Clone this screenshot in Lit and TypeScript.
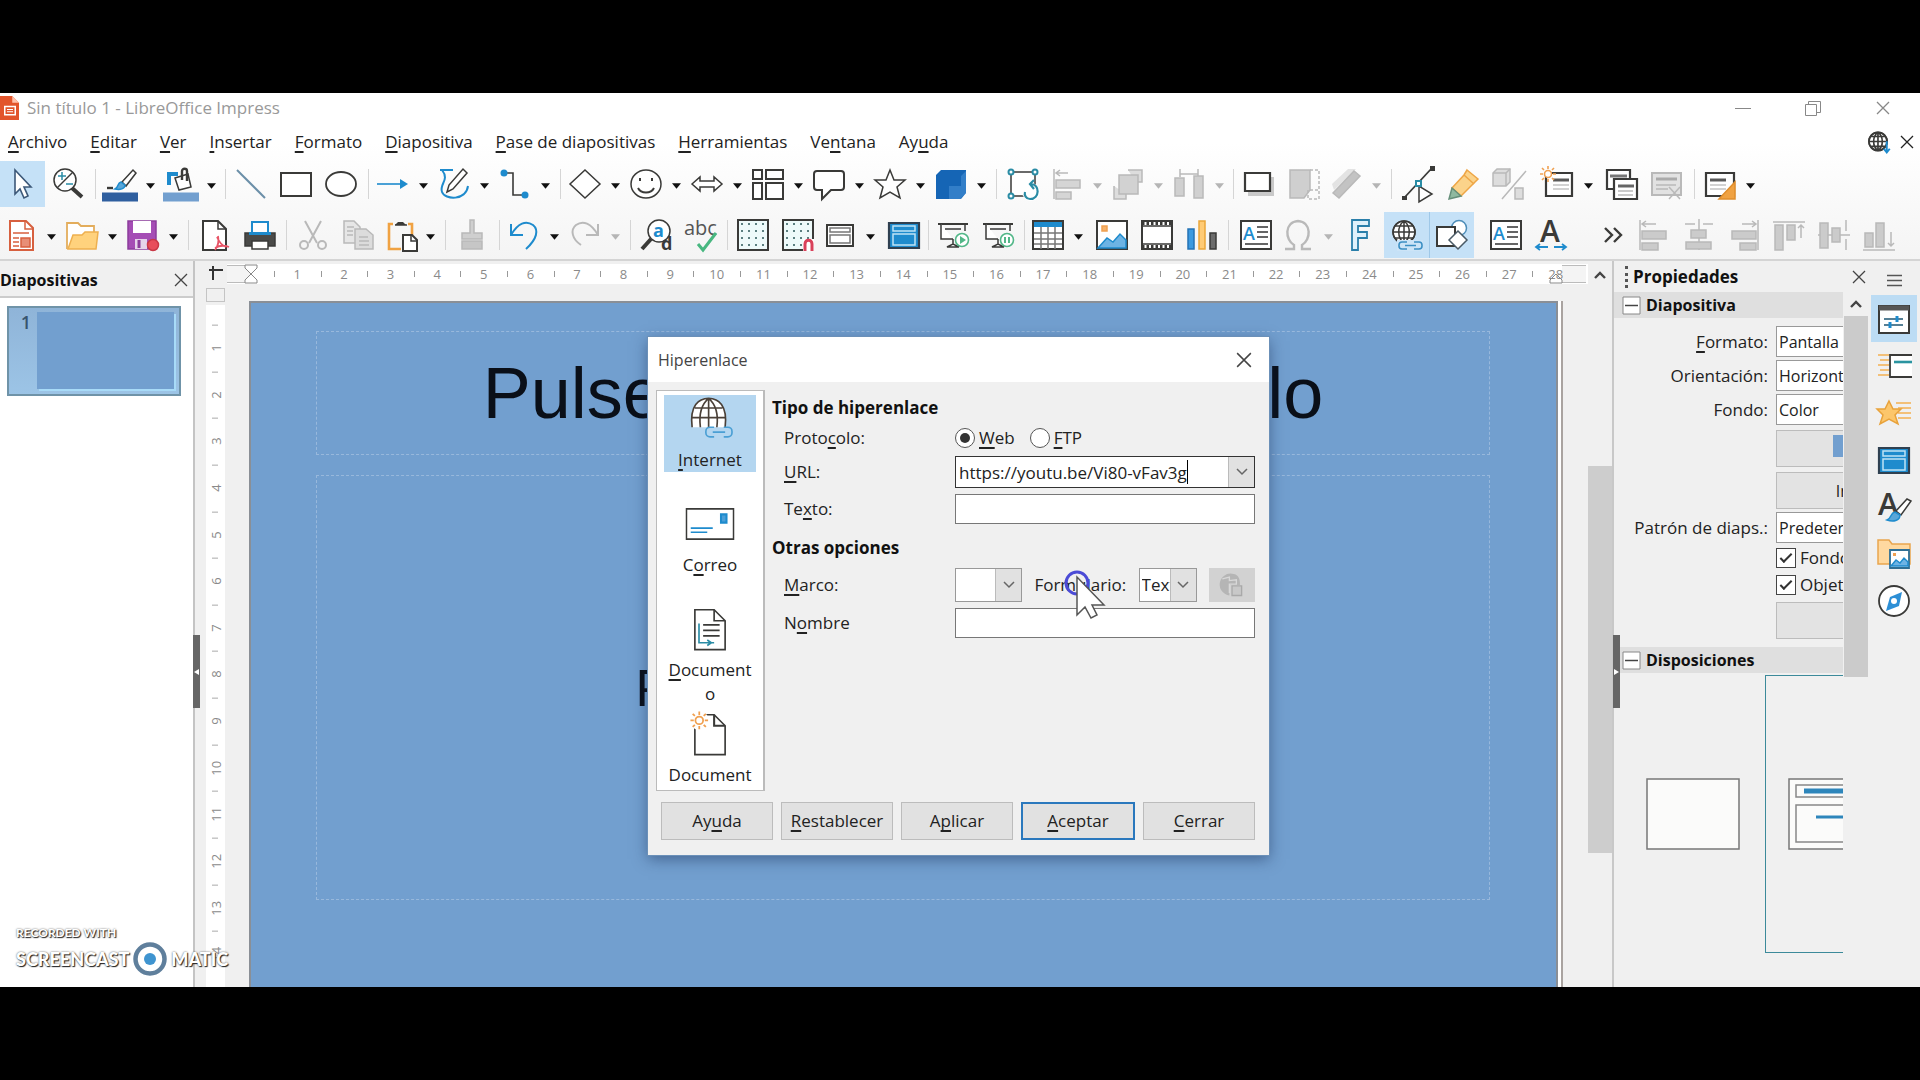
import { LitElement, html, svg, css, nothing } from "lit";
import { customElement } from "lit/decorators.js";
import { classMap } from "lit/directives/class-map.js";

const K = "#3a3a38";
const B = "#1e8bcd";
const T = "#2a8ca5";
const G = "#b9b9b9";

const sun = (x: number, y: number) => svg`<circle cx=${x} cy=${y} r="3.5" fill="#fff" stroke="#f0a050" stroke-width="1.6"/>
  <path d="M${x} ${y - 8}v3M${x} ${y + 5}v3M${x - 8} ${y}h3M${x + 5} ${y}h3M${x - 6} ${y - 6}l2 2M${x + 4} ${y + 4}l2 2M${x + 6} ${y - 6}l-2 2M${x - 4} ${y + 4}l-2 2" stroke="#f0a050" stroke-width="1.6"/>`;

const dots = svg`<path d="M4 5h26M4 12h26M4 19h26M4 26h26" stroke="#5b7f80" stroke-width="2" stroke-dasharray="2 5"/>`;

const globe = svg`<circle cx="13" cy="13" r="11" fill="#fff"/><path d="M13 2a11 11 0 1 0 .1 0zM13 2v22M2 13h22M4 7h18M4 19h18M13 2c-7 5-7 17 0 22M13 2c7 5 7 17 0 22"/>`;

const chain = svg`<path d="M16 23h-5a3 3 0 0 0-3 3v1a3 3 0 0 0 3 3h5M23 23h5a3 3 0 0 1 3 3v1a3 3 0 0 1-3 3h-5M14 26.500h11" stroke="#3c8fc4" stroke-width="1.6"/>`;

const lines = (x: number, y: number) => svg`<path d="M${x} ${y}h16" stroke-width="3" stroke="#5a5a5a"/><path d="M${x} ${y + 5}h16M${x} ${y + 9}h16" stroke="#c4c4c4" stroke-width="1.4"/>`;

const screen = svg`<path d="M1 5h30" stroke-width="2"/><path d="M4 5v15h12M16 20v6M10 28h12l-6-3z" fill="#fff"/><path d="M8 10h16" stroke="#666" stroke-width="2"/><path d="M28 6v6"/>`;

const icons: Record<string, unknown> = {
  pointer: svg`<path d="M8 2v24l5-5 4 9 4-2-4-9h7z" fill="#fff" stroke="#3c5878" stroke-width="1.6"/>`,
  zoom: svg`<circle cx="13" cy="12" r="11" fill="#fff"/><path d="M20 20l10 9" stroke-width="4"/><path d="M5 20L21 4"/><path d="M6 8h8M10 4v8M14 16h7" stroke="${T}"/>`,
  penColor: svg`<path d="M18 14L29 2l3 3-10 13z" fill="#fff"/><path d="M17 14c-4 1-2 5-6 7 5 1 10 0 10-4z" fill="#5aa6d8" stroke="${B}"/><path d="M3 20h6" stroke-width="2.4"/><path d="M-2 29h36" stroke="#2f5f9f" stroke-width="9"/>`,
  fillColor: svg`<path d="M4 17V6h9" stroke="${B}" stroke-width="4"/><path d="M10 10l13-4 3 13-12 3z" fill="#fff"/><path d="M17 12V3c0-3 5-3 5 0v10" stroke-width="2.4"/><path d="M-2 29h36" stroke="#729fcf" stroke-width="9"/>`,
  line: svg`<path d="M2 2l28 28" stroke="#6b8fa8" stroke-width="2"/>`,
  rect: svg`<path d="M1 5h30v23H1z" fill="#fff" stroke-width="2"/>`,
  ellipse: svg`<ellipse cx="16" cy="16" rx="15" ry="12" fill="#fff" stroke-width="1.8"/>`,
  arrow: svg`<path d="M0 16h26" stroke="${B}" stroke-width="1.600"/><path d="M23 11l8 5-8 5z" fill="${B}" stroke="none"/>`,
  curve: svg`<path d="M2 2h13M4 2c8 10-3 14 0 22 3 8 24 9 26-6" stroke="${B}" stroke-width="2"/><path d="M9 24l2-7L25 1l4 4-14 16z" fill="#fff"/>`,
  connector: svg`<path d="M4 5h10v22h12" stroke="${K}" stroke-width="1.6"/><circle cx="5" cy="5" r="3.500" fill="${B}" stroke="none"/><circle cx="26" cy="27" r="3.500" fill="${B}" stroke="none"/>`,
  diamond: svg`<path d="M16 2l15 14-15 14L1 16z" fill="#fff"/>`,
  smiley: svg`<ellipse cx="16" cy="16" rx="15" ry="14" fill="#fff"/><path d="M8 20c3 6 13 6 16 0M10 10v3M22 10v3" stroke-width="2"/>`,
  dblArrow: svg`<path d="M1 16l8-7v4h14V9l8 7-8 7v-4H9v4z" fill="#fff"/>`,
  flow: svg`<path d="M1 2h9v9H1zM14 2h17v9H14zM1 15h9v16H1zM14 15h17v16H14z" fill="#fff" stroke-width="2"/>`,
  callout: svg`<path d="M4 3h24c2 0 3 1 3 3v13c0 2-1 3-3 3H18l-9 9v-9H4c-2 0-3-1-3-3V6c0-2 1-3 3-3z" fill="#fff" stroke-width="2"/>`,
  star: svg`<path d="M16 2l4 10h11l-8 7 3 11-10-6-10 6 3-11-8-7h11z" fill="#fff"/>`,
  cube: svg`<path d="M1 7l5-5h25v23l-5 6H1z" fill="#1565b5" stroke="none"/><path d="M26 8v22l5-5V3zM14 31V18h12v13z" fill="#4f98dc" opacity=".5" stroke="none"/>`,
  rotate: svg`<path d="M4 4h24v24H4z" fill="#fff"/><g fill="#fff" stroke="${T}" stroke-width="2"><circle cx="4" cy="4" r="2.500"/><circle cx="28" cy="4" r="2.500"/><circle cx="4" cy="28" r="2.500"/></g><circle cx="24" cy="24" r="9" fill="#fff" stroke="none"/><path d="M24 16c9 0 9 15-1 15-4 0-6-4-5-7M27 12l-4 4 4 5" stroke="${T}" stroke-width="2.200"/>`,
  alignObj: svg`<path d="M3 1v30M5 5h12M9 2L5 5l4 3" stroke="${G}"/><path d="M5 12h24v8H5zM5 24h15v7H5z" fill="#d5d5d5" stroke="${G}"/>`,
  arrange: svg`<path d="M16 2h14v12h-6M2 18v13h12v-5" fill="#ddd" stroke="${G}"/><path d="M7 7h19v19H7z" fill="#d2d2d2" stroke="${G}"/>`,
  distribute: svg`<path d="M2 10h9v18H2zM21 8h9v22h-9z" fill="#d0d0d0" stroke="${G}"/><path d="M7 1v8M25 1v7M7 6h18" stroke="${G}"/>`,
  shadow: svg`<path d="M5 9h26v19H5z" fill="#c9c9c9" stroke="none"/><path d="M2 5h25v18H2z" fill="#fff" stroke-width="2.200"/>`,
  crop: svg`<path d="M2 2h20v20L16 30H2z" fill="#cfcfcf" stroke="${G}"/><path d="M22 2h9v29H20V22h11" stroke="${G}" stroke-dasharray="3 2"/>`,
  filter: svg`<path d="M2 16L18 1h8L4 22z" fill="#e3e3e3" stroke="none"/><path d="M3 25L24 3l6 5L9 30z" fill="#c3c3c3" stroke="${G}"/>`,
  points: svg`<path d="M2 30L30 0" stroke-width="1.800"/><path d="M28 -2h5v5h-5zM0 28h5v4H0z" fill="${K}" stroke="none"/><path d="M17 18v16l13-8z" fill="#fff"/><path d="M14 13h5v5h-5z" fill="#fff" stroke="${T}" stroke-width="2"/>`,
  glue: svg`<path d="M20 2l11 9-4 4-13 13-9-8L17 7z" fill="#fbd38a" stroke="#eea646"/><path d="M5 20l9 8-12 3z" fill="#8fb9a0" stroke="#668f7a"/><path d="M17 7l10 9" stroke="#eea646"/>`,
  extrude: svg`<path d="M1 5l4-4h13v13l-4 4H1zM23 20h8v11h-8z" fill="#ddd" stroke="${G}"/><path d="M1 5h13v13M14 5l4-4M34 3L10 31" stroke="${G}"/>`,
  newSlide: svg`<path d="M4 5h26v23H4z" fill="#fff" stroke-width="2.200"/>${lines(11, 12)}${sun(6, 6)}`,
  dupSlide: svg`<path d="M1 2h23v19H1z" fill="#fff" stroke-width="2.200"/><path d="M4 8h17" stroke="#777" stroke-width="3"/><path d="M8 11h23v20H8z" fill="#fff" stroke-width="2.200"/><path d="M12 18h16" stroke="#666" stroke-width="3"/><path d="M12 23h15M12 27h15" stroke="${G}"/>`,
  delSlide: svg`<path d="M1 5h29v22H1z" fill="#e2e2e2" stroke="${G}" stroke-width="2"/><path d="M5 11h21" stroke="#aaa" stroke-width="3"/><path d="M5 17h20M5 21h12M18 19l11 12M29 19L18 31" stroke="${G}"/>`,
  layout: svg`<path d="M2 5h28v23H2z" fill="#fff" stroke-width="2.200"/>${lines(6, 12)}<path d="M31 14v17H15z" fill="#f0a242" stroke="#e08e2c"/>`,
  newDoc: svg`<path d="M5 2h16l7 7v22H5z" fill="#fff" stroke="#d7603f" stroke-width="2"/><path d="M20 2v8h8M8 14h16M8 19h6M8 23h6M8 27h6" stroke="#d7603f"/><path d="M16 19h9v9h-9z" fill="#e88f77" stroke="#d7603f"/>`,
  open: svg`<path d="M1 30V4h11l3 3h13v7" fill="#fff" stroke="#e3ad5c" stroke-width="1.800"/><path d="M2 30l5-14h9l3-3h13l-2 17z" fill="#ffd27d" stroke="#eeb04f" stroke-width="1.500"/>`,
  save: svg`<path d="M1 2h28v28H1z" fill="#a54db5" stroke="#8c3d9c"/><path d="M6 2h18v12H6z" fill="#fff" stroke="none"/><path d="M8 20h12v10H8z" fill="#e6d3ea" stroke="none"/><path d="M12 21v8" stroke="#8c3d9c" stroke-width="3"/><circle cx="26" cy="26" r="5.500" fill="#e84d5b" stroke="#c93846"/>`,
  pdf: svg`<path d="M4 2h15l8 8v21H4z" fill="#fff" stroke-width="2"/><path d="M19 2v8h8"/><path d="M16 31c4-5 4-9 3-14M16 29c5-3 9-3 14-1M18 18c2 5 4 8 9 10" stroke="#e85467" stroke-width="1.800"/>`,
  print: svg`<path d="M8 3h16v11H8z" fill="#fff" stroke="${B}" stroke-width="2"/><path d="M1 14h30v13H1z" fill="#4a4a48" stroke="${K}"/><path d="M5 13h22v3H5z" fill="${B}" stroke="none"/><path d="M8 22h16v8H8z" fill="#fff"/>`,
  cut: svg`<path d="M8 2l12 22M24 2L12 24" stroke="${G}" stroke-width="2"/><circle cx="7" cy="26" r="4" stroke="${G}" stroke-width="2"/><circle cx="25" cy="26" r="4" stroke="${G}" stroke-width="2"/>`,
  copy: svg`<path d="M2 2h10l6 6v16H2z" fill="#e6e6e6" stroke="${G}"/><path d="M13 10h11l7 6v14H13z" fill="#dcdcdc" stroke="${G}"/><path d="M17 18h9M17 22h10M17 26h10M5 8h7M5 12h6M5 16h6" stroke="${G}"/>`,
  paste: svg`<path d="M9 5H5v25h12M24 5h4v11" stroke="#f0a242" stroke-width="2.600"/><path d="M11 6h11l-3-3h-5z" fill="${K}" stroke="none"/><path d="M11 6h12"/><path d="M19 16h9l5 5v11H19z" fill="#fff" stroke-width="2"/><path d="M27 16v6h6"/>`,
  clone: svg`<path d="M14 1h4v13h8v6H6v-6h8z" fill="#cfcfcf" stroke="${G}"/><path d="M6 22h20v8H6z" fill="#c6c6c6" stroke="${G}"/>`,
  undo: svg`<path d="M3 5v11h12M3 16C10 4 18 1 25 6c6 5 4 14-7 24" stroke="${B}" stroke-width="2"/>`,
  redo: svg`<path d="M29 5v11H17M29 16C22 4 14 1 7 6c-6 5-4 14 5 20" stroke="${G}" stroke-width="2"/>`,
  find: svg`<circle cx="18" cy="12" r="11" fill="#fff"/><path d="M10 20L1 30" stroke-width="4"/><text x="12" y="18" class="g" font-size="18" font-weight="700" fill="${B}">a</text><text x="20" y="31" class="g" font-size="18" font-weight="700" fill="${K}">d</text>`,
  spell: svg`<text x="-2" y="16" class="g" font-size="20" fill="#555">abc</text><path d="M12 25l5 6L30 14" stroke="#48b780" stroke-width="3"/>`,
  grid: svg`<path d="M1 1h30v30H1z" fill="#eefafa" stroke-width="2"/>${dots}`,
  snap: svg`<path d="M1 1h30v30H1z" fill="#eefafa" stroke-width="2"/>${dots}<path d="M21 20h11v12H21z" fill="#fff" stroke="none"/><path d="M23 32v-7c0-5 7-5 7 0v7" stroke="#d9415a" stroke-width="3"/>`,
  master: svg`<path d="M3 6h26v21H3z" fill="#fff" stroke-width="2"/><path d="M6 9h20v4H6zM6 16h20v8H6z" stroke="#777"/>`,
  display: svg`<path d="M1 4h30v25H1z" fill="#1e8bcd" stroke="#2f4050" stroke-width="2.200"/><path d="M5 7h22v5H5zM5 15h22v11H5z" stroke="#bfe3f5" stroke-width="1.500"/>`,
  present: svg`${screen}<circle cx="25" cy="21" r="6.500" fill="#fff" stroke="#52b788" stroke-width="1.600"/><path d="M23 17l6 4-6 4z" fill="#52b788" stroke="none"/>`,
  presentHere: svg`${screen}<circle cx="25" cy="21" r="6.500" fill="#fff" stroke="#52b788" stroke-width="1.600"/><path d="M23 18v6M27 18v6" stroke="#52b788" stroke-width="2"/>`,
  table: svg`<path d="M1 2h30v28H1z" fill="#fff" stroke-width="2"/><path d="M2 3h28v5H2z" fill="${B}" stroke="none"/><path d="M9 8v22M16 8v22M23 8v22M2 14h28M2 20h28M2 25h28" stroke="#777"/>`,
  image: svg`<path d="M1 2h30v28H1z" fill="#fff" stroke-width="2"/><path d="M6 7h5v5H6z" fill="#f6b26b" stroke="#f0a050"/><path d="M2 29l9-10 6 4 7-8 6 6v8z" fill="#6db3e4" stroke="${B}"/>`,
  film: svg`<path d="M1 2h30v28H1z" fill="#fff" stroke-width="2"/><path d="M1 4h30M1 28h30" stroke-width="4" stroke-dasharray="2.500 2"/><path d="M1 7h30M1 25h30"/>`,
  chart: svg`<path d="M2 10h6v20H2z" fill="#3b9ae0" stroke="#2473b5"/><path d="M13 2h6v28h-6z" fill="#ffcb75" stroke="#eaa63a"/><path d="M24 14h6v16h-6z" fill="#6b6b6b" stroke="${K}"/>`,
  textbox: svg`<path d="M1 2h30v28H1z" fill="#fff" stroke-width="2"/><text x="3" y="21" class="g" font-size="18" font-weight="600" fill="${B}">A</text><path d="M17 8h11M17 13h11M17 18h11M5 25h23" stroke="#666" stroke-width="1.800"/>`,
  omega: svg`<path d="M3 30h9v-4C3 21 2 3 16 2c14 1 13 19 4 24v4h9" stroke="${G}" stroke-width="2.400"/>`,
  fontwork: svg`<path d="M6 1h17v6H12v6h9v6h-9v12H6z" fill="#dff1fb" stroke="#2a7faa" stroke-width="1.800"/>`,
  link: svg`${globe}<path d="M6 21h26v11H6z" fill="#cce4f7" stroke="none"/>${chain}`,
  shapes: svg`<circle cx="23" cy="9" r="7.500" fill="#fff" stroke="#4d8db8"/><path d="M1 8h18v19H1z" fill="#fff" stroke-width="2"/><path d="M22 12l9 9-9 9-9-9z" fill="#fff" stroke="#4a5a66"/>`,
  charSpace: svg`<text x="5" y="23" class="g" font-size="30" font-weight="600" fill="${K}">A</text><path d="M1 28h12M19 28h12M5 25l-4 3 4 3M27 25l4 3-4 3" stroke="${B}" stroke-width="1.800"/>`,
  more: svg`<path d="M9 9l7 7-7 7M18 9l7 7-7 7" stroke-width="2.400"/>`,
  aLeft: svg`<path d="M2 1v30M4 5h14M8 2L4 5l4 3" stroke="${G}"/><path d="M4 12h24v8H4zM4 24h16v7H4z" fill="#cbcbcb" stroke="${G}"/>`,
  aCenter: svg`<path d="M16 0v31M2 5h10M20 5h10" stroke="${G}"/><path d="M8 11h15v8H8zM3 23h25v7H3z" fill="#cbcbcb" stroke="${G}"/>`,
  aRight: svg`<path d="M30 1v30M14 5h14M24 2l4 3-4 3" stroke="${G}"/><path d="M4 12h24v8H4zM12 24h16v7H12z" fill="#cbcbcb" stroke="${G}"/>`,
  aTop: svg`<path d="M0 3h32M28 19V6M25 9l3-3 3 3" stroke="${G}"/><path d="M2 6h8v25H2zM14 6h8v15h-8z" fill="#cbcbcb" stroke="${G}"/>`,
  aMiddle: svg`<path d="M0 16h32M28 1v11M28 20v11" stroke="${G}"/><path d="M2 4h8v25H2zM14 9h8v14h-8z" fill="#cbcbcb" stroke="${G}"/>`,
  aBottom: svg`<path d="M0 31h32M28 13v14M25 24l3 3 3-3" stroke="${G}"/><path d="M2 14h8v14H2zM13 4h8v24h-8z" fill="#cbcbcb" stroke="${G}"/>`,
  props: svg`<path d="M1 3h30v27H1z" fill="#fff" stroke-width="2"/><path d="M1 5h30" stroke-width="5" stroke="#555"/><path d="M6 16h19M6 22h19" stroke="#557f95" stroke-width="1.800"/><path d="M19 13v6M12 19v6" stroke="${B}" stroke-width="3"/>`,
  transition: svg`<path d="M0 5h11M2 10h9M0 15h11M2 20h9M0 25h11" stroke="#f3c078" stroke-width="1.800"/><path d="M34 5H12v22h22" fill="#fff" stroke-width="1.800"/><path d="M16 12h18" stroke="#2a94a0" stroke-width="2.600"/>`,
  animation: svg`<path d="M18 6h15M20 11h13M20 16h13M20 21h13" stroke="#f3c078" stroke-width="1.800"/><path d="M11 4l4 8h8l-6 6 3 9-9-5-9 5 3-9-6-6h8z" fill="#fcc66b" stroke="#e8a23b"/>`,
  styles: svg`<text x="0" y="24" class="g" font-size="31" font-weight="600" fill="${K}">A</text><path d="M18 20L29 8l4 2-10 14z" fill="#fff"/><path d="M17 21c-5 1-3 6-8 8 6 2 13 1 13-5z" fill="#5aa6d8" stroke="${B}"/>`,
  gallery: svg`<path d="M0 26V2h11l3 4h18v20z" fill="#ffd9a0" stroke="#e9a54d" stroke-width="1.500"/><path d="M12 12h19v18H12z" fill="#fff" stroke="#2f6f95" stroke-width="1.800"/><path d="M13 28l5-6 4 3 4-5 4 4v4z" fill="#6db3e4" stroke="${B}"/><path d="M15 15h3v3h-3z" fill="#f0a050" stroke="none"/>`,
  navigator: svg`<circle cx="16" cy="16" r="15" fill="#fff" stroke-width="1.800"/><path d="M24 7l-3 14-13 5 4-14z" fill="#2d8fd6" stroke="none"/><circle cx="16" cy="16" r="3" fill="#fff" stroke="none"/>`,
  impress: svg`<path d="M2 0h17l9 9v23H2z" fill="#e2552c" stroke="none"/><path d="M19 0v9h9z" fill="#ffc2ac" stroke="none"/><path d="M9 14h14v11H9z" stroke="#fff" stroke-width="2"/><path d="M12 18h8M12 21h8" stroke="#fff"/>`,
  globeDown: svg`<g transform="translate(-1 1) scale(1.1)" stroke-width="2">${globe}</g><path d="M25 15v14M21 25l4 5 4-5" stroke="${B}" stroke-width="2.600"/>`,
  mail: svg`<path d="M-3 5h38v22H-3z" fill="#fff" stroke-width="1.200" transform="translate(1.600 0) scale(.9 1)"/><path d="M24 9h4v6h-4z" fill="#4b9fd8" stroke="${B}"/><path d="M2 19h16M2 22h12" stroke="${B}" stroke-width="1.200"/>`,
  document: svg`<path d="M5 2h14l8 8v21H5z" fill="#fff" stroke-width="1.200"/><path d="M19 2v8h8M11 13h12M11 17h12M11 21h12" stroke-width="1.200"/><path d="M8 12v14h11M14 24l3 2-3 2" stroke="${T}" stroke-width="1.200"/>`,
  newDocument: svg`<path d="M5 2h14l8 8v21H5z" fill="#fff" stroke-width="1.200"/><path d="M19 2v8h8"/><circle cx="8" cy="6" r="7" fill="#fff" stroke="none"/><g transform="translate(1 .5) scale(.8)">${sun(9, 7)}</g>`,
  internet: svg`<path d="M3 22C1 6 8 1 15 1s14 5 12 21z" fill="#fff" stroke="none"/><path d="M3 22C1 6 8 1 15 1s14 5 12 21M15 1v21M3 15h24M5 8h20M15 1C9 6 8 14 9 22M15 1c6 5 7 13 6 21" stroke="#4a4038" stroke-width="1.200"/><g transform="translate(4 -1)"><path d="M15 23h-3a3 3 0 0 0-3 3v1a3 3 0 0 0 3 3h3M22 23h3a3 3 0 0 1 3 3v1a3 3 0 0 1-3 3h-3M14 26.500h9" stroke="#4a9fd4" stroke-width="1.200"/></g>`,
  insert: svg`<path d="M16 3A11 11 0 1 0 13 28V16h12C26 8 22 3 16 3z" fill="#b5b5b5" stroke="none"/><path d="M5 9l8-2v4l8-1v5h-8v10" stroke="#d8d8d8"/><path d="M16 17h11v11H16z" fill="#c8c8c8" stroke="#a9a9a9"/>`,
};

const icon = (name: string, cls = "") =>
  html`<svg class="icon ${cls}" viewBox="0 0 32 32" fill="none" stroke=${K} stroke-width="1.500" aria-hidden="true">${icons[name]}</svg>`;

const caretDown = html`<svg class="tri" viewBox="0 0 10 6" aria-hidden="true"><path d="M0 0h10L5 6z" fill="currentColor"/></svg>`;
const chevron = html`<svg class="chev" viewBox="0 0 12 8" aria-hidden="true"><path d="M1 1l5 5 5-5" fill="none" stroke="#666" stroke-width="1.500"/></svg>`;
const chevronUp = html`<svg class="chev" viewBox="0 0 12 8" aria-hidden="true"><path d="M1 7l5-5 5 5" fill="none" stroke="#444" stroke-width="2.400"/></svg>`;
const cross = html`<svg class="cross" viewBox="0 0 14 14" aria-hidden="true"><path d="M1 1l12 12M13 1L1 13" fill="none" stroke="currentColor" stroke-width="1.300"/></svg>`;

/** "_" marks the mnemonic letter that follows it. */
const mn = (s: string) => {
  const i = s.indexOf("_");
  return i < 0 ? s : html`${s.slice(0, i)}<u>${s[i + 1]}</u>${s.slice(i + 2)}`;
};

/**
 * Toolbar notation: "name" plain button, "name+" split button, "name!" pressed,
 * "name-" disabled, "|" separator, a number is blank space in pixels.
 */
const DRAW_BAR = "pointer! zoom |10 penColor+ fillColor+ |6 line rect ellipse |10 arrow+ curve+ connector+ |9 diamond+ smiley+ dblArrow+ flow+ callout+ star+ cube+ |8 rotate 2 alignObj+- arrange+- distribute+- |6 shadow crop- filter+- |8 points glue extrude- 8 newSlide+ dupSlide delSlide- |11 layout+".split(" ");
const MAIN_BAR = "1 newDoc+ open+ save+ |8 pdf print |8 cut- copy- paste+ |8 clone- |10 undo+ redo+- |8 find spell |6 grid snap master+ display |4 present presentHere |8 table+ image film chart |9 textbox omega+- fontwork link! shapes! 9 textbox charSpace 20 more~ aLeft- aCenter- aRight- aTop- aMiddle- aBottom-".split(" ");

const MENU = ["_Archivo", "_Editar", "_Ver", "_Insertar", "_Formato", "_Diapositiva", "_Pase de diapositivas", "_Herramientas", "Ve_ntana", "Ay_uda"];
const TABS = ["props", "transition", "animation", "display", "styles", "gallery", "navigator"];
const PAGES: [string, string, string][] = [
  ["internet", "_Internet", ""],
  ["mail", "C_orreo", ""],
  ["document", "_Document", "o"],
  ["newDocument", "Document", ""],
];

@customElement("app-root")
export class AppRoot extends LitElement {
  static styles = css`
    :host { display: flex; flex-direction: column; box-sizing: border-box; min-height: 100vh; padding: 93px 0; background: #000; color: #222; font: 17px/20px "Open Sans", "Noto Sans", sans-serif; }
    *, *::before { box-sizing: border-box; }
    button, input, select { font: inherit; color: inherit; border: 0; background: none; padding: 0; margin: 0; border-radius: 0; appearance: none; min-width: 0; }
    h2, h3, p { margin: 0; font-size: inherit; }
    u { text-decoration-thickness: 2px; text-underline-offset: 3px; text-decoration-skip-ink: none; }
    svg { display: block; flex: none; }
    .g { font-family: "Open Sans", sans-serif; stroke: none; }
    .app { position: relative; flex: 1; display: flex; flex-direction: column; min-height: 0; overflow: hidden; background: #f0f0f0; }
    .icon { width: 32px; height: 32px; overflow: visible; }
    .icon.small { width: 24px; height: 24px; }
    .icon.big { width: 44px; height: 44px; }
    .cross { width: 14px; height: 14px; }
    .chev { width: 12px; height: 8px; }
    .tri { width: 9px; height: 6px; }

    .head { background: linear-gradient(#fff 30%, #f4f4f4); border-bottom: 2px solid #d4d4d4; padding-bottom: 1px; }
    .titlebar { display: flex; align-items: center; height: 30px; color: #999; gap: 5px; }
    .titlebar .icon { margin-left: -2px; }
    .wins { margin-left: auto; display: flex; padding-right: 2px; color: #888; }
    .wins button { width: 70px; display: grid; place-items: center; }
    .menubar { display: flex; align-items: center; height: 38px; padding-left: 8px; }
    .menubar nav { display: flex; gap: 23px; }
    .menubar a { color: inherit; text-decoration: none; }
    .doc { margin-left: auto; display: flex; align-items: center; gap: 8px; padding-right: 6px; }
    .bar { display: flex; height: 46px; overflow: hidden; }
    .bar + .bar { margin-top: 5px; }
    .btn { flex: none; width: 45px; display: grid; place-items: center; }
    .btn.on { background: #c5e1f7; }
    .btn.on + .on { border-left: 1px solid #9fc8e8; }
    .btn.narrow { width: 38px; }
    .split { flex: none; display: flex; width: 61px; }
    .split .btn { width: 39px; }
    .split .drop { width: 22px; display: grid; place-items: center; color: #111; padding-top: 3px; }
    .split .drop:disabled { color: #b5b5b5; }
    .gap { flex: none; display: grid; place-items: center; }
    .gap.line::before { content: ""; width: 1px; height: 30px; background: #d5d5d5; }

    .main { flex: 1; display: flex; min-height: 0; }
    .slides { flex: none; width: 195px; background: #fff; border-right: 2px solid #c4c4c4; }
    .phead { display: flex; align-items: center; justify-content: space-between; height: 37px; padding: 3px 5px 0 0; background: #f0f0f0; border-bottom: 2px solid #ccc; color: #444; font-weight: 700; }
    .phead h2 { color: #111; font-size: 16px; }
    .thumb { display: flex; width: 174px; height: 90px; margin: 8px 0 0 7px; padding: 4px 5px 5px 0; border: 2px solid #6f93a8; background: linear-gradient(#8fb4d8, #9cc4e6); font-weight: 600; font-size: 18px; color: #37546e; }
    .thumb span { width: 28px; text-align: center; padding-left: 6px; }
    .thumb i { flex: 1; background: #729fcf; box-shadow: 2px 2px 0 #a8dbf8; }
    .handle { position: relative; z-index: 1; display: grid; place-items: center; flex: none; width: 7px; height: 73px; background: #666; margin-top: 374px; }
    .handle svg { width: 5px; height: 6px; }
    .handle.left { margin-left: -2px; }

    .work { flex: 1; min-width: 0; display: grid; grid-template-columns: 27px minmax(0, 1fr) 24px; grid-template-rows: 24px minmax(0, 1fr); }
    .corner { display: grid; place-items: center; padding-left: 4px; }
    .corner svg { width: 14px; height: 14px; }
    .hruler { position: relative; display: flex; padding: 0 9px 0 47px; margin-top: 3px; height: 20px; background: #fff; color: #8a8a8a; font-size: 13px; }
    .edge { position: absolute; top: 1px; bottom: 1px; width: 24px; background: #f4f4f4; border: solid #bbb; border-width: 1px 0; }
    .edge.l { left: 0; }
    .edge.r { right: 2px; }
    .mark { position: absolute; top: 0; left: 17px; width: 14px; height: 20px; }
    .mark.end { left: auto; right: 25px; }
    .hruler span { position: relative; flex: 1; text-align: center; }
    .hruler span::before { content: ""; position: absolute; left: 0; top: 7px; width: 1px; height: 6px; background: #999; }
    .vcol { display: flex; flex-direction: column; padding: 3px 2px 0 6px; min-height: 0; }
    .tabbox { height: 14px; background: #f0f0f0; border: 1px solid #c4c4c4; margin-bottom: 3px; }
    .vruler { flex: 1; display: flex; flex-direction: column; padding: 20px 0 9px; background: #fff; color: #8a8a8a; font-size: 13px; min-height: 0; }
    .vruler span { position: relative; flex: 1; writing-mode: vertical-rl; transform: rotate(180deg); text-align: center; }
    .vruler span::before { content: ""; position: absolute; bottom: 0; left: 7px; width: 6px; height: 1px; background: #aaa; }
    .canvas { min-width: 0; min-height: 0; overflow: hidden; padding: 16px 30px 0 22px; }
    .slide { height: 100%; display: flex; flex-direction: column; gap: 20px; padding: 28px 66px 87px 65px; background: #729fcf; border: solid #8a8f96; border-width: 2px 2px 0 2px; box-shadow: 3px 0 0 #fff, 5px 0 0 #a9a3a0; font-family: "Liberation Sans", Arial, sans-serif; color: #0a0f18; }
    .slide div { display: grid; place-items: center; border: 1px dashed #98b8dc; white-space: nowrap; }
    .slide .st { height: 124px; font-size: 72px; line-height: 80px; }
    .slide .sb { flex: 1; font-size: 52px; line-height: 60px; }
    .vscroll { display: flex; flex-direction: column; align-items: center; grid-row: 1 / 3; grid-column: 3; padding-top: 10px; }
    .vscroll i { width: 100%; height: 387px; margin-top: 187px; background: #cdcdcd; }

    .side { flex: none; width: 308px; display: flex; border-left: 2px solid #c8c8c8; }
    .side .handle { margin-left: -1px; margin-right: -6px; }
    .deck { width: 257px; display: flex; flex-direction: column; }
    .dhead { display: flex; align-items: center; height: 31px; padding: 1px 5px 0 11px; gap: 5px; color: #444; font-weight: 700; }
    .dhead h2 { flex: 1; color: #111; font-size: 17px; }
    .grip { width: 3px; height: 22px; border-left: 3px dotted #555; }
    .dbody { flex: 1; display: flex; min-height: 0; }
    .dcontent { width: 229px; overflow: hidden; }
    .sec { display: flex; align-items: center; gap: 5px; height: 26px; padding-left: 8px; background: #dfdfdf; font-weight: 700; font-size: 16px; color: #111; }
    .sec svg { width: 19px; height: 19px; }
    .props { display: grid; grid-template-columns: 154px 250px; column-gap: 8px; row-gap: 3px; padding: 8px 0 8px; }
    .props > .lab { text-align: right; align-self: center; white-space: nowrap; }
    .props > .wide { grid-column: 2; }
    .field { height: 31px; border: 1px solid #999; background: #fff; padding: 0 2px; font-size: 16px; }
    .push { height: 37px; margin-top: 2px; background: #e3e3e3; border: 1px solid #bcbcbc; font-size: 16px; }
    .swatch { display: block; width: 130px; height: 22px; margin: 0 0 6px 56px; background: #729fcf; }
    .chk { display: flex; align-items: center; gap: 4px; height: 24px; white-space: nowrap; }
    .chk input { width: 20px; height: 20px; border: 1px solid #444; background: #fff; display: grid; place-items: center; flex: none; }
    .chk input:checked::before { content: ""; width: 12px; height: 6px; border: solid #333; border-width: 0 0 2px 2px; transform: rotate(-45deg) translate(1px, -1px); }
    .layouts { display: flex; height: 280px; padding-top: 2px; }
    .layouts button { flex: none; width: 151px; display: grid; place-items: center; padding-left: 6px; }
    .layouts button + button { width: 140px; border: 1px solid #3c8a9a; padding: 0; }
    .layouts svg { width: 94px; height: 72px; }
    .dscroll { width: 24px; margin-left: 1px; display: flex; flex-direction: column; align-items: center; padding-top: 8px; }
    .dscroll i { width: 100%; height: 361px; margin-top: 8px; background: #cbcbcb; }
    .tabs { display: flex; flex-direction: column; align-items: center; width: 46px; padding-top: 9px; }
    .tabs .burger { height: 20px; width: 16px; margin-bottom: 5px; display: grid; place-items: center; }
    .tabs .burger svg { width: 15px; height: 13px; }
    .tabs .tab { width: 46px; height: 47px; display: grid; place-items: center; }
    .tabs .tab.on { background: #bcdcf4; }

    .dialog { position: absolute; top: 244px; left: calc(50% - 312px); width: 621px; height: 518px; display: flex; flex-direction: column; background: #f0f0f0; box-shadow: 0 0 0 1px #6b90b8, 0 4px 14px rgba(20, 40, 80, .5); }
    .dtitle { display: flex; align-items: center; justify-content: space-between; height: 45px; padding: 0 17px 0 10px; background: #fff; color: #444; font-size: 16px; }
    .dtitle .cross { width: 16px; height: 16px; }
    .dmain { flex: 1; display: flex; gap: 7px; padding: 8px 14px 0 8px; min-height: 0; }
    .pages { flex: none; width: 109px; height: 401px; padding: 4px 7px 0; background: #fff; border: 1px solid #bbb; border-right-width: 2px; overflow: hidden; }
    .page { display: flex; flex-direction: column; align-items: center; gap: 7px; width: 92px; height: 105px; padding-top: 2px; line-height: 24px; }
    .page.on { height: 77px; margin-bottom: 28px; background: #b4d6f0; }
    .form { flex: 1; display: grid; grid-template-columns: 183px minmax(0, 1fr); grid-template-rows: 28px 32px 36px 38px 40px 34px 42px; align-items: center; align-content: start; padding-top: 4px; }
    .form h3 { grid-column: 1 / 3; color: #111; }
    .form .fl { padding-left: 12px; }
    .radios { display: flex; gap: 15px; }
    .radios label { display: flex; align-items: center; gap: 4px; }
    .radios input { width: 20px; height: 20px; border: 1px solid #555; border-radius: 50%; background: #fff; display: grid; place-items: center; }
    .radios input:checked::before { content: ""; width: 10px; height: 10px; border-radius: 50%; background: #333; }
    .box { width: 100%; height: 30px; border: 1px solid #777; background: #fff; padding: 0 3px; }
    .combo { display: flex; align-items: center; height: 32px; border: 1px solid #333; background: #fff; padding-left: 3px; }
    .combo input { field-sizing: content; height: 28px; }
    .combo i { width: 1px; height: 24px; background: #000; }
    .combo button { margin-left: auto; width: 26px; align-self: stretch; background: #e1e1e1; border-left: 1px solid #bbb; display: grid; place-items: center; }
    .row { display: flex; align-items: center; justify-content: space-between; }
    .sel { display: grid; height: 34px; border: 1px solid #999; background: #fff; }
    .sel select, .sel span { grid-area: 1 / 1; }
    .sel select { width: 100%; padding: 0 26px 0 2px; }
    .sel span { justify-self: end; width: 26px; background: #e1e1e1; border-left: 1px solid #bbb; display: grid; place-items: center; pointer-events: none; }
    .sel.m { width: 67px; }
    .sel.f { width: 58px; }
    .row > button { width: 46px; height: 34px; background: #d2d2d2; display: grid; place-items: center; }
    .row .icon { width: 28px; height: 28px; }
    .actions { display: flex; gap: 8px; padding: 0 14px 15px 13px; }
    .actions button { flex: 1; height: 38px; background: #e1e1e1; border: 1px solid #bcbcbc; }
    .actions .ok { border: 2px solid #2a78bd; }

    .cursor { position: absolute; left: 1064px; top: 476px; width: 42px; height: 50px; }
    .mark-by { position: absolute; left: 16px; bottom: 10px; color: #fff; font: 700 12px/16px Lato, sans-serif; text-shadow: 1px 1px 1px #222, 0 0 2px #555; }
    .mark-by div { display: flex; align-items: center; gap: 3px; font-size: 18px; line-height: 36px; font-weight: 900; }
    .mark-by svg { width: 36px; height: 36px; }
  `;

  private tool(token: string) {
    if (/^\|?\d+$/.test(token)) {
      const line = token[0] === "|";
      return html`<span class=${classMap({ gap: true, line })} style="width:${parseInt(line ? token.slice(1) : token, 10)}px"></span>`;
    }
    const name = token.replace(/[^a-zA-Z]/g, "");
    const off = token.includes("-");
    const btn = html`<button class=${classMap({ btn: true, on: token.includes("!"), narrow: token.includes("~") })} ?disabled=${off} aria-label=${name}>${icon(name)}</button>`;
    return token.includes("+")
      ? html`<span class="split">${btn}<button class="drop" ?disabled=${off} aria-label="${name} +">${caretDown}</button></span>`
      : btn;
  }

  private section(title: string) {
    return html`<h3 class="sec"><svg viewBox="0 0 19 19" aria-hidden="true"><path d="M1 1h17v17H1z" fill="#fff" stroke="#888"/><path d="M3 9.500h13" stroke="#444" stroke-width="1.500"/></svg>${title}</h3>`;
  }

  private head() {
    return html`<header class="head">
      <div class="titlebar">${icon("impress", "small")}<span>Sin título 1 - LibreOffice Impress</span>
        <div class="wins">
          <button aria-label="Minimizar"><svg width="16" height="16"><path d="M0 8.500h16" stroke="currentColor"/></svg></button>
          <button aria-label="Restaurar"><svg width="18" height="16" fill="none" stroke="currentColor"><path d="M1.500 4.500h11v11h-11zM4.500 4V1.500h12v11H13"/></svg></button>
          <button aria-label="Cerrar">${cross}</button>
        </div>
      </div>
      <div class="menubar"><nav>${MENU.map((m) => html`<a href="#">${mn(m)}</a>`)}</nav>
        <div class="doc">${icon("globeDown", "small")}<button aria-label="Cerrar documento">${cross}</button></div>
      </div>
      <div class="bar">${DRAW_BAR.map((t) => this.tool(t))}</div>
      <div class="bar">${MAIN_BAR.map((t) => this.tool(t))}</div>
    </header>`;
  }

  private work() {
    const cm = (n: number) => Array.from({ length: n }, (_, i) => html`<span>${i + 1}</span>`);
    return html`<section class="work">
      <div class="corner"><svg viewBox="0 0 14 14"><path d="M0 4h14M4 0v14" stroke="#333" stroke-width="2"/></svg></div>
      <div class="hruler"><i class="edge l"></i><i class="edge r"></i>${cm(28)}
        <svg class="mark" viewBox="0 0 14 20"><path d="M1 1h12v3L7 10 1 4zM1 19h12v-3l-6-6-6 6z" fill="#fff" stroke="#888"/></svg>
        <svg class="mark end" viewBox="0 0 14 20"><path d="M1 19h12v-3l-6-6-6 6z" fill="none" stroke="#888"/></svg>
      </div>
      <div class="vcol"><i class="tabbox"></i><div class="vruler">${cm(14)}</div></div>
      <div class="canvas"><div class="slide">
        <div class="st">Pulse para añadir un título</div>
        <div class="sb">Pulse para añadir texto</div>
      </div></div>
      <div class="vscroll">${chevronUp}<i></i></div>
    </section>`;
  }

  private sidebar() {
    return html`<aside class="side">
      <span class="handle"><svg viewBox="0 0 5 6"><path d="M0 0l5 3-5 3z" fill="#fff"/></svg></span>
      <div class="deck">
        <div class="dhead"><i class="grip"></i><h2>Propiedades</h2><button aria-label="Cerrar barra lateral">${cross}</button></div>
        <div class="dbody">
          <div class="dcontent">
            ${this.section("Diapositiva")}
            <div class="props">
              <label class="lab" for="fmt">${mn("_Formato:")}</label><select class="field" id="fmt"><option>Pantalla</option></select>
              <label class="lab" for="ori">Orientación:</label><select class="field" id="ori"><option>Horizontal</option></select>
              <label class="lab" for="bg">Fondo:</label><select class="field" id="bg"><option>Color</option></select>
              <button class="push wide" aria-label="Color de fondo"><span class="swatch"></span></button>
              <button class="push wide">Insertar imagen…</button>
              <label class="lab" for="mst">Patrón de diaps.:</label><select class="field" id="mst"><option>Predeterminado</option></select>
              <label class="chk wide"><input type="checkbox" checked />Fondo</label>
              <label class="chk wide"><input type="checkbox" checked />Objetos</label>
              <button class="push wide" aria-label="Vista de patrón"></button>
            </div>
            ${this.section("Disposiciones")}
            <div class="layouts">
              <button aria-label="Diapositiva en blanco"><svg viewBox="0 0 94 72"><path d="M1 1h92v70H1z" fill="#fbfbfa" stroke="#777" stroke-width="1.500"/></svg></button>
              <button aria-label="Título, contenido"><svg viewBox="0 0 94 72" fill="none"><path d="M1 1h92v70H1z" fill="#fbfbfa" stroke="#777" stroke-width="1.500"/><path d="M8 7h78v12H8zM8 27h78v37H8z" stroke="#888" stroke-width="1.500"/><path d="M16 13h62" stroke="#2e86bb" stroke-width="5"/><path d="M28 39h38" stroke="#2e86bb" stroke-width="3"/></svg></button>
            </div>
          </div>
          <div class="dscroll">${chevronUp}<i></i></div>
        </div>
      </div>
      <nav class="tabs">
        <button class="burger" aria-label="Configuración"><svg viewBox="0 0 15 13"><path d="M0 1.500h15M0 6.500h15M0 11.500h15" stroke="#555" stroke-width="1.500"/></svg></button>
        ${TABS.map((t, i) => html`<button class=${classMap({ tab: true, on: i === 0 })} aria-label=${t}>${icon(t)}</button>`)}
      </nav>
    </aside>`;
  }

  private dialog() {
    return html`<section class="dialog" role="dialog" aria-label="Hiperenlace">
      <div class="dtitle"><span>Hiperenlace</span><button aria-label="Cerrar diálogo">${cross}</button></div>
      <div class="dmain">
        <div class="pages">${PAGES.map(([ic, name, rest], i) => html`<button class=${classMap({ page: true, on: i === 0 })}>${icon(ic, "big")}<span>${mn(name)}${rest ? html`<br />${rest}` : nothing}</span></button>`)}</div>
        <div class="form">
          <h3>Tipo de hiperenlace</h3>
          <span class="fl">${mn("Proto_colo:")}</span>
          <div class="radios"><label><input type="radio" name="p" checked /><span>${mn("_Web")}</span></label><label><input type="radio" name="p" /><span>${mn("_FTP")}</span></label></div>
          <label class="fl" for="url">${mn("_URL:")}</label>
          <div class="combo"><input id="url" value="https://youtu.be/Vi80-vFav3g" /><i></i><button aria-label="Historial">${chevron}</button></div>
          <label class="fl" for="txt">${mn("Te_xto:")}</label><input class="box" id="txt" />
          <h3>Otras opciones</h3>
          <label class="fl" for="frame">${mn("_Marco:")}</label>
          <div class="row">
            <div class="sel m"><select id="frame"><option></option></select><span>${chevron}</span></div>
            <label for="form">Formulario:</label>
            <div class="sel f"><select id="form"><option>Texto</option></select><span>${chevron}</span></div>
            <button disabled aria-label="Sucesos">${icon("insert")}</button>
          </div>
          <label class="fl" for="name">${mn("N_ombre")}</label><input class="box" id="name" />
        </div>
      </div>
      <div class="actions">${["Ay_uda", "_Restablecer", "A_plicar", "_Aceptar", "_Cerrar"].map((b) => html`<button class=${b === "_Aceptar" ? "ok" : ""}>${mn(b)}</button>`)}</div>
    </section>`;
  }

  render() {
    return html`<div class="app">
      ${this.head()}
      <div class="main">
        <aside class="slides">
          <div class="phead"><h2>Diapositivas</h2><button aria-label="Cerrar panel">${cross}</button></div>
          <div class="thumb"><span>1</span><i></i></div>
        </aside>
        <span class="handle left"><svg viewBox="0 0 5 6"><path d="M5 0L0 3l5 3z" fill="#fff"/></svg></span>
        ${this.work()}
        ${this.sidebar()}
      </div>
      ${this.dialog()}
      <svg class="cursor" viewBox="0 0 42 50" fill="none"><circle cx="13" cy="14" r="11" stroke="#4b4bd6" stroke-width="3"/><path d="M13 8v38l8-8 6 11 6-3-5-10h12z" fill="#fff" stroke="#555" stroke-width="1.500"/></svg>
      <div class="mark-by">RECORDED WITH<div><span>SCREENCAST</span><svg viewBox="0 0 36 36"><circle cx="18" cy="18" r="14.500" fill="#fff" stroke="#5f7f9c" stroke-width="4.500"/><circle cx="18" cy="18" r="6" fill="#3f94d0"/></svg><span>MATIC</span></div></div>
    </div>`;
  }
}
